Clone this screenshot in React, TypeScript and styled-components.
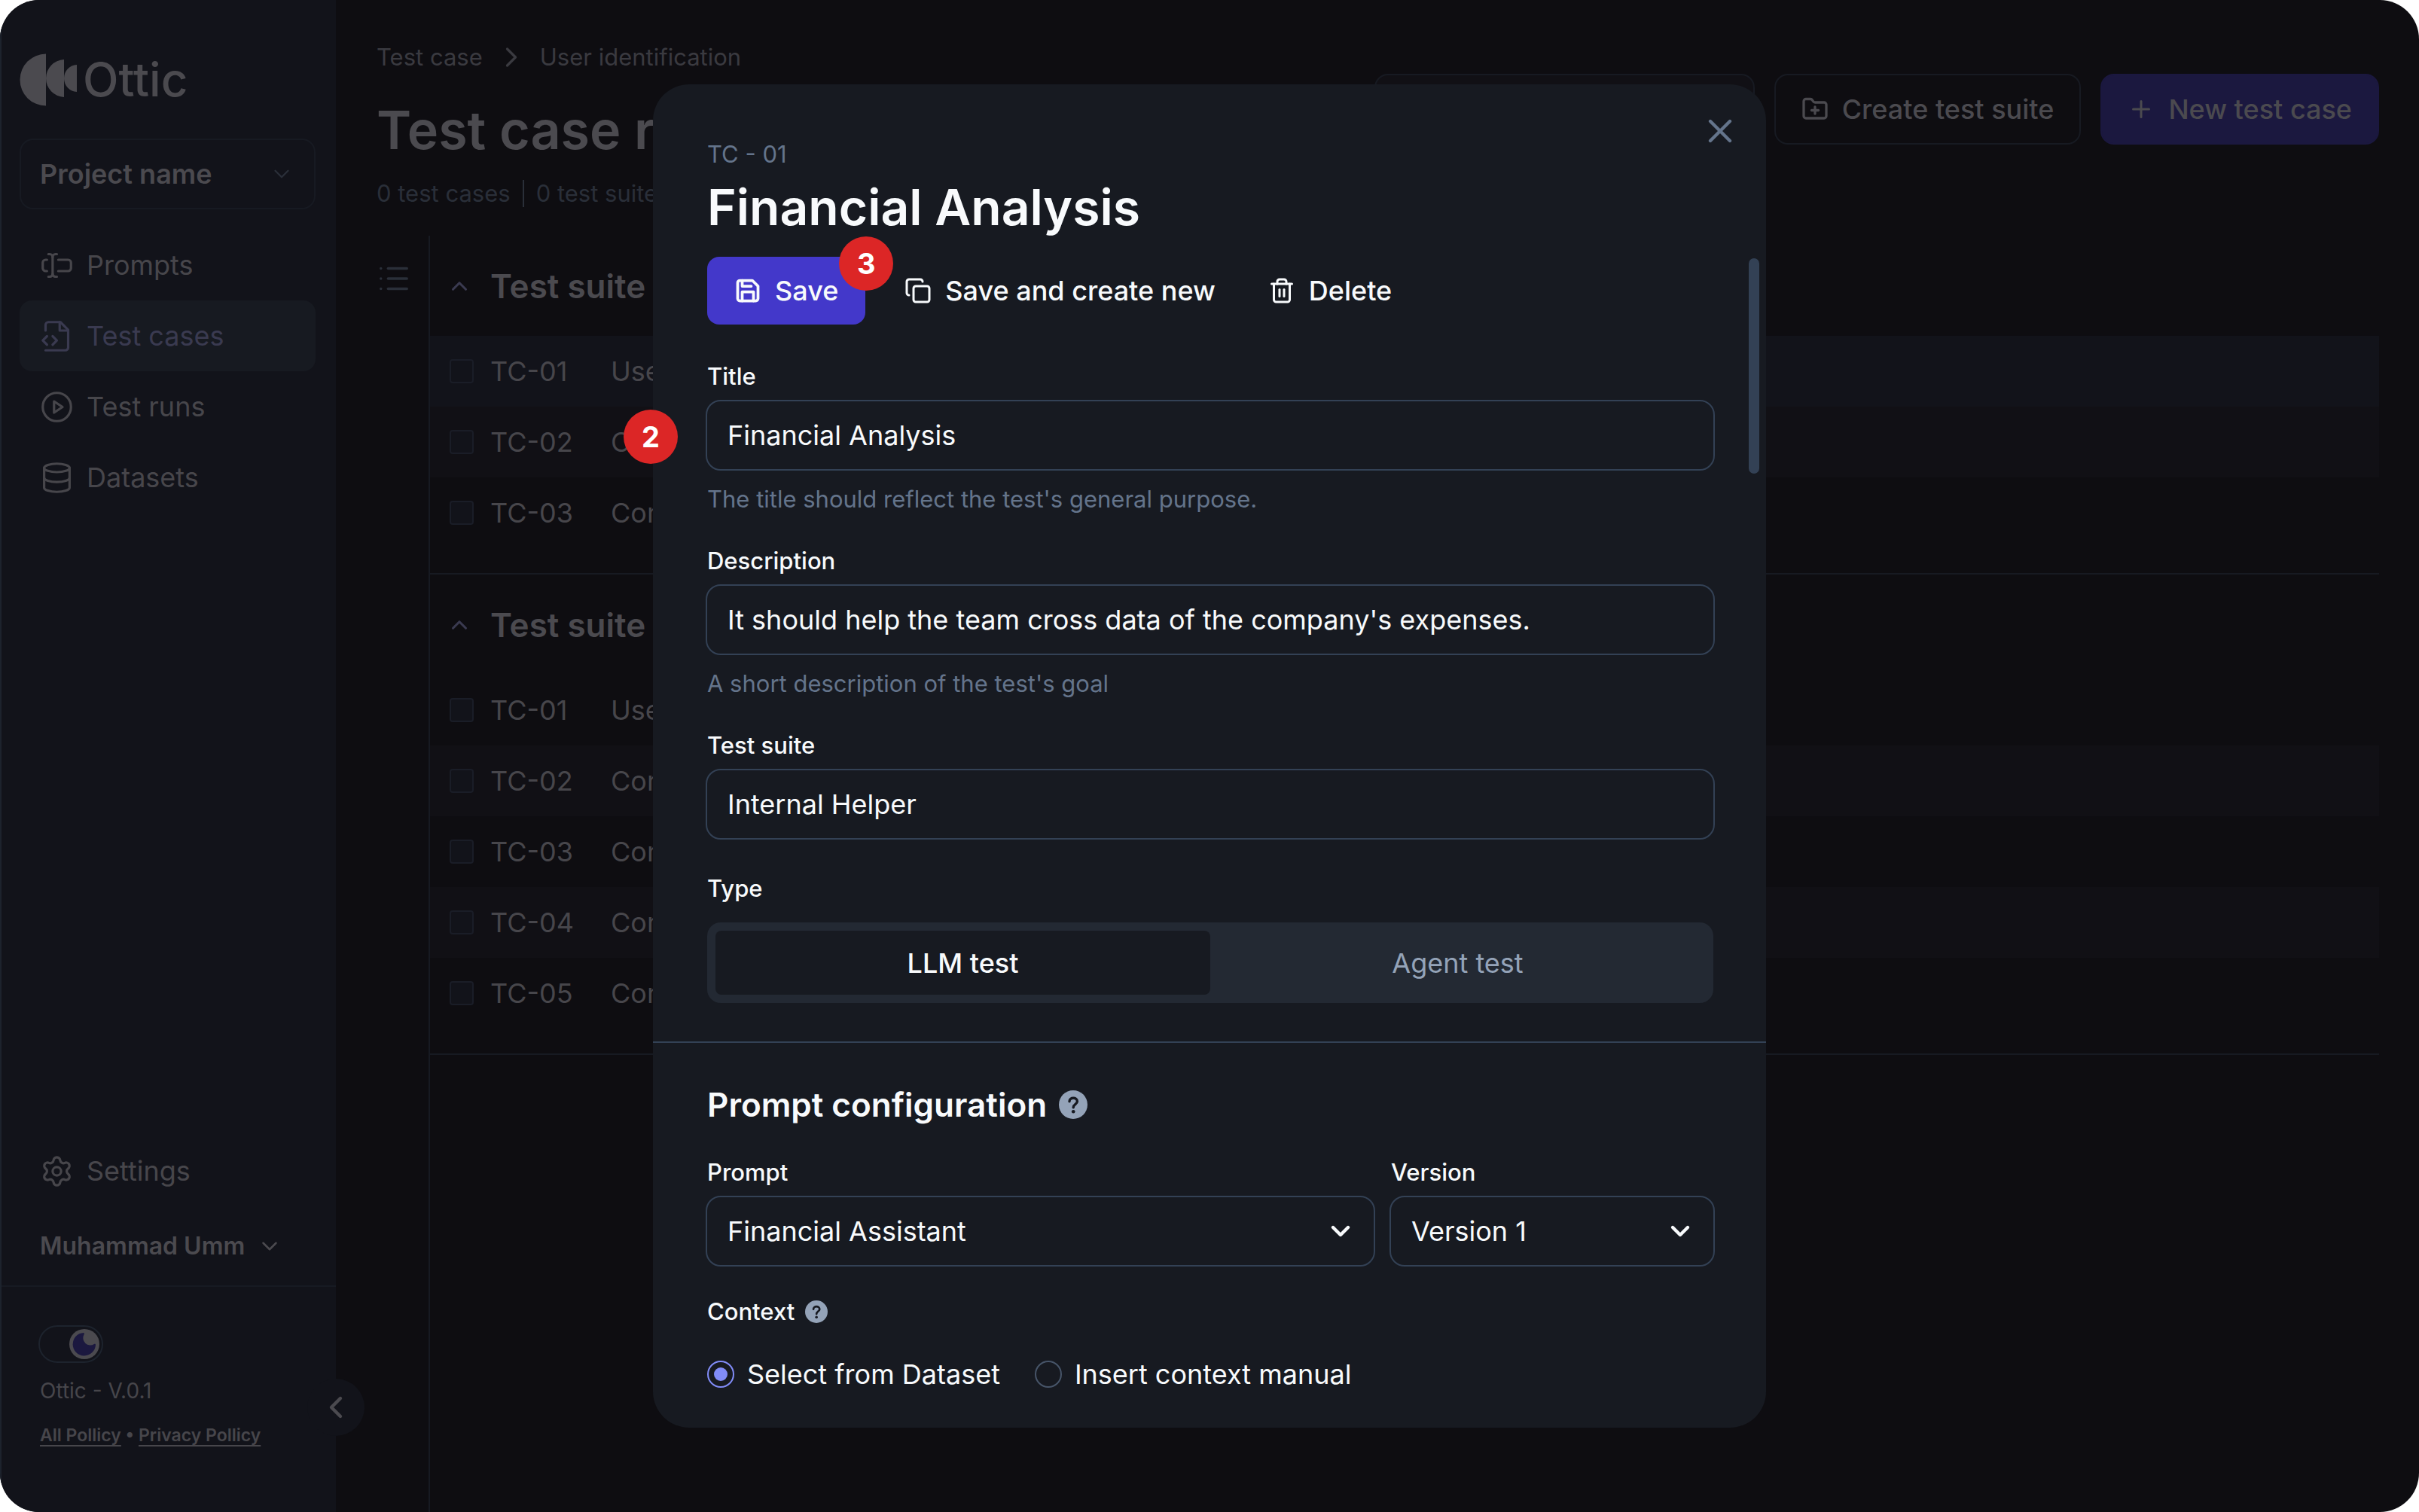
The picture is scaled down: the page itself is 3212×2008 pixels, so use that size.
import React, { useState } from "react";
import styled, { createGlobalStyle, css } from "styled-components";
import {
  ChevronDown,
  ChevronLeft,
  ChevronRight,
  ChevronUp,
  Copy,
  Database,
  FolderPlus,
  List,
  Plus,
  Settings,
  TextCursorInput,
  Trash2,
  X,
} from "lucide-react";

const color = {
  page: "#0e0d11",
  sidebar: "#12131a",
  sidebarEdge: "#1d232d",
  line: "#171a22",
  active: "#171a21",
  stripe: "#111015",
  dimText: "#47464b",
  dimStrong: "#4b4a4f",
  dimIndigo: "#3a3a50",
  dimSlate: "#2a2f39",
  dimAccent: "#1b183f",
  panel: "#171a21",
  border: "#334155",
  slate: "#64748b",
  slateLight: "#94a3b8",
  segment: "#232933",
  text: "#f8fafc",
  accent: "#4338ca",
  radio: "#818cf8",
  badge: "#dc2626",
};

const GlobalStyle = createGlobalStyle`
  *, *::before, *::after { box-sizing: border-box; }
  body { margin: 0; background: #fff; font-family: Inter, "Liberation Sans", sans-serif; }
  button, input, select { font: inherit; color: inherit; margin: 0; }
  button { cursor: pointer; }
  h1, h2, h3, p, ul { margin: 0; padding: 0; }
  svg { display: block; flex: none; }
`;

const Shell = styled.div`
  position: relative;
  display: flex;
  min-height: 100vh;
  border-radius: 52px;
  overflow: hidden;
  background: ${color.page};
  color: ${color.dimText};
`;

const Sidebar = styled.aside`
  position: relative;
  flex: none;
  display: flex;
  flex-direction: column;
  width: 446px;
  background: ${color.sidebar};
  border-left: 2px solid ${color.sidebarEdge};
`;

const SidebarTop = styled.div`
  flex: 1;
  display: flex;
  flex-direction: column;
  padding: 71px 27px 0 24px;
`;

const Brand = styled.div`
  display: flex;
  align-items: center;
  gap: 7px;
  height: 70px;
  margin-bottom: 43px;
  color: ${color.dimStrong};
  font-size: 62px;
  font-weight: 500;
  line-height: 70px;
`;

const ProjectButton = styled.button`
  display: flex;
  align-items: center;
  justify-content: space-between;
  height: 94px;
  padding: 0 26px 0 25px;
  margin-bottom: 27px;
  background: none;
  border: 2px solid ${color.line};
  border-radius: 18px;
  color: ${color.dimStrong};
  font-size: 36px;
  font-weight: 600;
`;

const NavItem = styled.a<{ $active?: boolean }>`
  display: flex;
  align-items: center;
  gap: 17px;
  height: 94px;
  padding: 0 27px;
  border-radius: 16px;
  font-size: 36px;
  text-decoration: none;
  color: ${(p) => (p.$active ? color.dimIndigo : color.dimText)};
  background: ${(p) => (p.$active ? color.active : "none")};
`;

const Spacer = styled.div`
  flex: 1;
`;

const UserButton = styled.button`
  display: flex;
  align-items: center;
  gap: 16px;
  height: 105px;
  padding: 0 27px;
  background: none;
  border: 0;
  color: ${color.dimStrong};
  font-size: 32px;
  font-weight: 600;
`;

const SidebarFooter = styled.footer`
  display: flex;
  flex-direction: column;
  align-items: flex-start;
  height: 301px;
  padding: 51px 49px 0;
  border-top: 2px solid ${color.line};
`;

const ThemeSwitch = styled.button`
  display: flex;
  justify-content: flex-end;
  align-items: center;
  width: 86px;
  height: 50px;
  padding: 3px;
  background: none;
  border: 2px solid ${color.sidebarEdge};
  border-radius: 25px;
`;

const VersionText = styled.p`
  margin-top: 19px;
  padding-left: 2px;
  font-size: 28px;
  line-height: 36px;
`;

const Policies = styled.p`
  margin-top: 25px;
  padding-left: 2px;
  font-size: 23px;
  font-weight: 600;
  line-height: 32px;
  white-space: nowrap;

  a {
    color: inherit;
    text-underline-offset: 5px;
    text-decoration-thickness: 2px;
  }
`;

const CollapseButton = styled.button`
  position: absolute;
  right: -38px;
  bottom: 101px;
  display: grid;
  place-items: center;
  width: 76px;
  height: 76px;
  padding: 0;
  border: 0;
  border-radius: 50%;
  background: ${color.sidebar};
  color: ${color.dimStrong};
`;

const Main = styled.main`
  flex: 1;
  min-width: 0;
  display: flex;
  flex-direction: column;
  padding: 56px 53px 0 54px;
`;

const Header = styled.header`
  display: flex;
  justify-content: space-between;
  align-items: flex-start;
  height: 257px;
`;

const Crumbs = styled.nav`
  display: flex;
  align-items: center;
  gap: 16px;
  height: 40px;
  font-size: 31px;
  line-height: 40px;
  color: #3a3a40;

  a {
    color: inherit;
    text-decoration: none;
  }
`;

const PageTitle = styled.h1`
  margin-top: 33px;
  color: ${color.dimStrong};
  font-size: 70px;
  font-weight: 600;
  line-height: 88px;
`;

const Counts = styled.p`
  display: flex;
  align-items: center;
  gap: 16px;
  margin-top: 20px;
  color: ${color.dimSlate};
  font-size: 31px;
  line-height: 40px;
`;

const CountDivider = styled.span`
  width: 2px;
  height: 36px;
  background: ${color.dimSlate};
`;

const Actions = styled.div`
  display: flex;
  gap: 26px;
  padding-top: 42px;
`;

const SearchInput = styled.input`
  width: 505px;
  height: 94px;
  padding: 0 28px;
  background: ${color.stripe};
  border: 2px solid ${color.line};
  border-radius: 18px;
`;

const HeaderButton = styled.button<{ $primary?: boolean }>`
  display: flex;
  align-items: center;
  gap: 18px;
  height: 94px;
  padding: 0 34px;
  background: ${(p) => (p.$primary ? color.dimAccent : "none")};
  border: 2px solid ${(p) => (p.$primary ? color.dimAccent : color.line)};
  border-radius: 18px;
  color: ${color.dimStrong};
  font-size: 36px;
  font-weight: 500;
  white-space: nowrap;
`;

const Workspace = styled.div`
  flex: 1;
  display: flex;
`;

const ListToggle = styled.button`
  display: flex;
  align-items: flex-start;
  width: 69px;
  padding: 34px 0 0;
  background: none;
  border: 0;
  color: ${color.dimSlate};
`;

const Suites = styled.div`
  flex: 1;
  border-left: 2px solid ${color.line};
`;

const Suite = styled.section`
  padding-bottom: 33px;
  border-bottom: 2px solid ${color.line};
`;

const SuiteHeader = styled.h2`
  display: flex;
  align-items: center;
  gap: 24px;
  height: 133px;
  padding-left: 22px;
  color: ${color.dimStrong};
  font-size: 44px;
  font-weight: 600;

  svg {
    color: ${color.dimIndigo};
  }
`;

const CaseTable = styled.table`
  width: 100%;
  border-collapse: collapse;
  table-layout: fixed;
`;

const CaseRow = styled.tr<{ $tone: "plain" | "stripe" | "selected" }>`
  height: 94px;
  font-size: 36px;
  background: ${(p) =>
    p.$tone === "selected" ? color.sidebar : p.$tone === "stripe" ? color.stripe : "none"};
`;

const Cell = styled.td<{ $width?: number }>`
  ${(p) => p.$width && css`width: ${p.$width}px;`}
  padding: 0;
`;

const CheckCell = styled(Cell)`
  padding-left: 26px;
`;

const Checkbox = styled.input`
  display: block;
  appearance: none;
  width: 32px;
  height: 32px;
  background: ${color.sidebar};
  border: 2px solid #1a1d27;
  border-radius: 4px;
`;

const Overlay = styled.div`
  position: absolute;
  inset: 0;
  display: grid;
  place-items: center;
`;

const Modal = styled.section`
  position: relative;
  width: 1478px;
  border-radius: 48px;
  background: ${color.panel};
  color: ${color.text};
`;

const ModalSection = styled.div`
  display: flex;
  flex-direction: column;
  padding: 0 68px 0 70px;
`;

const CloseButton = styled.button`
  position: absolute;
  top: 36px;
  right: 35px;
  display: grid;
  place-items: center;
  width: 52px;
  height: 52px;
  padding: 0;
  background: none;
  border: 0;
  color: ${color.slate};
`;

const ScrollThumb = styled.div`
  position: absolute;
  top: 231px;
  right: 9px;
  width: 14px;
  height: 286px;
  border-radius: 7px;
  background: ${color.border};
`;

const CaseId = styled.p`
  padding: 73px 2px 0;
  color: ${color.slate};
  font-size: 31px;
  line-height: 40px;
`;

const ModalTitle = styled.h2`
  padding: 8px 2px 0;
  font-size: 66px;
  font-weight: 600;
  line-height: 84px;
`;

const Toolbar = styled.div`
  display: flex;
  align-items: center;
  gap: 34px;
  margin: 24px 2px 0;
`;

const ToolButton = styled.button<{ $primary?: boolean }>`
  position: relative;
  display: flex;
  align-items: center;
  gap: 18px;
  height: 90px;
  padding: 0 ${(p) => (p.$primary ? 36 : 18)}px;
  background: ${(p) => (p.$primary ? color.accent : "none")};
  border: 0;
  border-radius: 16px;
  font-size: 36px;
  font-weight: 500;
`;

const StepBadge = styled.span`
  position: absolute;
  display: grid;
  place-items: center;
  width: 72px;
  height: 72px;
  border-radius: 50%;
  background: ${color.badge};
  color: #fff;
  font-size: 38px;
  font-weight: 700;
`;

const SaveBadge = styled(StepBadge)`
  top: -27px;
  right: -37px;
`;

const FieldBadge = styled(StepBadge)`
  left: -109px;
  bottom: 9px;
`;

const Field = styled.div<{ $gap?: number }>`
  display: flex;
  flex-direction: column;
  flex: 1;
  margin-top: ${(p) => p.$gap ?? 42}px;
`;

const Label = styled.label`
  display: flex;
  align-items: center;
  gap: 14px;
  padding: 0 2px;
  font-size: 31px;
  font-weight: 500;
  line-height: 40px;
`;

const Control = styled.div`
  position: relative;
  display: flex;
  align-items: center;
  margin-top: 11px;
`;

const boxed = css`
  width: 100%;
  height: 94px;
  padding: 0 27px;
  background: ${color.panel};
  border: 2px solid ${color.border};
  border-radius: 20px;
  font-size: 36px;
`;

const TextInput = styled.input`
  ${boxed}
`;

const Select = styled.select`
  ${boxed}
  appearance: none;
`;

const SelectArrow = styled.span`
  position: absolute;
  right: 26px;
  pointer-events: none;
`;

const Hint = styled.p`
  margin-top: 18px;
  padding: 0 2px;
  color: ${color.slate};
  font-size: 31px;
  line-height: 40px;
`;

const Segmented = styled.div`
  display: grid;
  grid-template-columns: 1fr 1fr;
  margin: 25px 2px 0;
  padding: 11px;
  border-radius: 18px;
  background: ${color.segment};
`;

const Segment = styled.button<{ $on: boolean }>`
  height: 85px;
  border: 0;
  border-radius: 8px;
  background: ${(p) => (p.$on ? color.panel : "none")};
  color: ${(p) => (p.$on ? color.text : color.slateLight)};
  font-size: 36px;
  font-weight: ${(p) => (p.$on ? 500 : 400)};
`;

const Rule = styled.hr`
  height: 2px;
  margin: 51px 0 0;
  border: 0;
  background: ${color.border};
`;

const SectionTitle = styled.h3`
  display: flex;
  align-items: center;
  gap: 16px;
  padding: 54px 2px 0;
  font-size: 44px;
  font-weight: 600;
  line-height: 56px;
`;

const FieldRow = styled.div`
  display: grid;
  grid-template-columns: 889px 1fr;
  gap: 19px;
`;

const RadioRow = styled.div`
  display: flex;
  gap: 46px;
  padding: 40px 2px 48px;
`;

const RadioLabel = styled.label`
  display: flex;
  align-items: center;
  gap: 17px;
  font-size: 36px;
  line-height: 46px;
`;

const Radio = styled.input`
  display: grid;
  place-items: center;
  appearance: none;
  width: 36px;
  height: 36px;
  border: 2px solid #475569;
  border-radius: 50%;

  &:checked {
    border-color: ${color.radio};
  }

  &:checked::after {
    content: "";
    width: 18px;
    height: 18px;
    border-radius: 50%;
    background: ${color.radio};
  }
`;

function BrandMark() {
  return (
    <svg width="77" height="70" viewBox="0 0 77 70" fill={color.dimStrong} aria-hidden="true">
      <path d="M35 0.500V69.500A34.500 34.500 0 0 1 35 0.500Z" />
      <path d="M59 8V58A25 25 0 0 1 35 33A25 25 0 0 1 59 8Z" />
      <path d="M76 15V51A18 18 0 0 1 59 33A18 18 0 0 1 76 15Z" />
    </svg>
  );
}

type LineIconProps = { size: number; strokeWidth: number };

function LineIcon({ size, strokeWidth, children }: LineIconProps & { children: React.ReactNode }) {
  return (
    <svg
      width={size}
      height={size}
      viewBox="0 0 24 24"
      fill="none"
      stroke="currentColor"
      strokeWidth={strokeWidth}
      strokeLinecap="round"
      strokeLinejoin="round"
      aria-hidden="true"
    >
      {children}
    </svg>
  );
}

function FileCode(props: LineIconProps) {
  return (
    <LineIcon {...props}>
      <path d="M4 22h14a2 2 0 0 0 2-2V7.500L14.500 2H6a2 2 0 0 0-2 2v4" />
      <path d="M14 2v6h6" />
      <path d="m5 12-3 3 3 3" />
      <path d="m9 18 3-3-3-3" />
    </LineIcon>
  );
}

function PlayCircle(props: LineIconProps) {
  return (
    <LineIcon {...props}>
      <circle cx="12" cy="12" r="10" />
      <path d="m10 8 6 4-6 4z" />
    </LineIcon>
  );
}

function Floppy(props: LineIconProps) {
  return (
    <LineIcon {...props}>
      <path d="M19 21H5a2 2 0 0 1-2-2V5a2 2 0 0 1 2-2h11l5 5v11a2 2 0 0 1-2 2z" />
      <path d="M17 21v-8H7v8" />
      <path d="M7 3v5h8" />
    </LineIcon>
  );
}

function Moon() {
  return (
    <svg width="40" height="40" viewBox="0 0 40 40" aria-hidden="true">
      <circle cx="20" cy="20" r="20" fill={color.dimStrong} />
      <path
        d="M19 5A15.200 15.200 0 1 0 35 21C35 19.500 34 19.400 33 20A9.500 9.500 0 0 1 19.500 7.500C20 6 20 5 19 5Z"
        fill={color.dimAccent}
      />
    </svg>
  );
}

function Help({ size }: { size: number }) {
  return (
    <svg width={size} height={size} viewBox="0 0 38 38" role="img" aria-label="Help">
      <circle cx="19" cy="19" r="19" fill={color.slateLight} />
      <path
        d="M14 14.800C14 8.800 24.400 8.800 24.400 14.800C24.400 18.400 19.200 18.400 19.200 22.800"
        fill="none"
        stroke={color.panel}
        strokeWidth="3.400"
        strokeLinecap="round"
      />
      <circle cx="19.200" cy="28.200" r="2.300" fill={color.panel} />
    </svg>
  );
}

const navigation = [
  { name: "Prompts", Icon: TextCursorInput },
  { name: "Test cases", Icon: FileCode },
  { name: "Test runs", Icon: PlayCircle },
  { name: "Datasets", Icon: Database },
];

const suites = [
  {
    name: "Test suite 1",
    selected: "TC-01",
    cases: [
      ["TC-01", "User identification"],
      ["TC-02", "Confirm order"],
      ["TC-03", "Confirm address"],
    ],
  },
  {
    name: "Test suite 2",
    selected: "",
    cases: [
      ["TC-01", "User identification"],
      ["TC-02", "Confirm order"],
      ["TC-03", "Confirm address"],
      ["TC-04", "Confirm payment"],
      ["TC-05", "Confirm delivery"],
    ],
  },
];

function SidebarPanel() {
  return (
    <Sidebar>
      <SidebarTop>
        <Brand>
          <BrandMark />
          Ottic
        </Brand>
        <ProjectButton type="button">
          Project name
          <ChevronDown size={34} strokeWidth={1.6} color={color.dimSlate} />
        </ProjectButton>
        {navigation.map(({ name, Icon }) => (
          <NavItem key={name} href="#" $active={name === "Test cases"}>
            <Icon size={45} strokeWidth={1.7} />
            {name}
          </NavItem>
        ))}
        <Spacer />
        <NavItem href="#">
          <Settings size={45} strokeWidth={1.7} />
          Settings
        </NavItem>
        <UserButton type="button">
          Muhammad Umm
          <ChevronDown size={34} strokeWidth={1.8} />
        </UserButton>
      </SidebarTop>
      <SidebarFooter>
        <ThemeSwitch type="button" role="switch" aria-checked="true" aria-label="Dark theme">
          <Moon />
        </ThemeSwitch>
        <VersionText>Ottic - V.0.1</VersionText>
        <Policies>
          <a href="#">All Pollicy</a> • <a href="#">Privacy Pollicy</a>
        </Policies>
      </SidebarFooter>
      <CollapseButton type="button" aria-label="Collapse sidebar">
        <ChevronLeft size={48} strokeWidth={2.2} />
      </CollapseButton>
    </Sidebar>
  );
}

function CaseList() {
  return (
    <Main>
      <Header>
        <div>
          <Crumbs aria-label="Breadcrumb">
            <a href="#">Test case</a>
            <ChevronRight size={44} strokeWidth={1.8} />
            <span>User identification</span>
          </Crumbs>
          <PageTitle>Test case repository</PageTitle>
          <Counts>
            0 test cases
            <CountDivider />0 test suites
          </Counts>
        </div>
        <Actions>
          <SearchInput type="search" aria-label="Search test cases" />
          <HeaderButton type="button">
            <FolderPlus size={36} strokeWidth={2.2} />
            Create test suite
          </HeaderButton>
          <HeaderButton type="button" $primary>
            <Plus size={36} strokeWidth={2} />
            New test case
          </HeaderButton>
        </Actions>
      </Header>
      <Workspace>
        <ListToggle type="button" aria-label="Show outline">
          <List size={46} strokeWidth={1.8} />
        </ListToggle>
        <Suites>
          {suites.map((suite) => (
            <Suite key={suite.name}>
              <SuiteHeader>
                <ChevronUp size={34} strokeWidth={2.2} />
                {suite.name}
              </SuiteHeader>
              <CaseTable>
                <tbody>
                  {suite.cases.map(([id, name], i) => (
                    <CaseRow
                      key={id}
                      $tone={id === suite.selected ? "selected" : i % 2 ? "stripe" : "plain"}
                    >
                      <CheckCell $width={80}>
                        <Checkbox type="checkbox" aria-label={`Select ${id}`} />
                      </CheckCell>
                      <Cell $width={160}>{id}</Cell>
                      <Cell>{name}</Cell>
                    </CaseRow>
                  ))}
                </tbody>
              </CaseTable>
            </Suite>
          ))}
        </Suites>
      </Workspace>
    </Main>
  );
}

function CaseModal() {
  const [kind, setKind] = useState("LLM test");
  return (
    <Modal role="dialog" aria-label="Financial Analysis">
      <CloseButton type="button" aria-label="Close">
        <X size={52} strokeWidth={2} />
      </CloseButton>
      <ScrollThumb />
      <ModalSection>
        <CaseId>TC - 01</CaseId>
        <ModalTitle>Financial Analysis</ModalTitle>
        <Toolbar>
          <ToolButton type="button" $primary>
            <Floppy size={36} strokeWidth={2.5} />
            Save
            <SaveBadge>3</SaveBadge>
          </ToolButton>
          <ToolButton type="button">
            <Copy size={36} strokeWidth={2} />
            Save and create new
          </ToolButton>
          <ToolButton type="button">
            <Trash2 size={36} strokeWidth={2} />
            Delete
          </ToolButton>
        </Toolbar>
        <Field $gap={49}>
          <Label htmlFor="title">Title</Label>
          <Control>
            <FieldBadge>2</FieldBadge>
            <TextInput id="title" defaultValue="Financial Analysis" />
          </Control>
          <Hint>The title should reflect the test's general purpose.</Hint>
        </Field>
        <Field>
          <Label htmlFor="description">Description</Label>
          <Control>
            <TextInput
              id="description"
              defaultValue="It should help the team cross data of the company's expenses."
            />
          </Control>
          <Hint>A short description of the test's goal</Hint>
        </Field>
        <Field>
          <Label htmlFor="suite">Test suite</Label>
          <Control>
            <TextInput id="suite" defaultValue="Internal Helper" />
          </Control>
        </Field>
        <Field $gap={45}>
          <Label as="span" id="kind">
            Type
          </Label>
          <Segmented role="group" aria-labelledby="kind">
            {["LLM test", "Agent test"].map((name) => (
              <Segment
                key={name}
                type="button"
                $on={kind === name}
                aria-pressed={kind === name}
                onClick={() => setKind(name)}
              >
                {name}
              </Segment>
            ))}
          </Segmented>
        </Field>
      </ModalSection>
      <Rule />
      <ModalSection>
        <SectionTitle>
          Prompt configuration
          <Help size={38} />
        </SectionTitle>
        <FieldRow>
          <Field>
            <Label htmlFor="prompt">Prompt</Label>
            <Control>
              <Select id="prompt">
                <option>Financial Assistant</option>
              </Select>
              <SelectArrow>
                <ChevronDown size={40} strokeWidth={2.6} />
              </SelectArrow>
            </Control>
          </Field>
          <Field>
            <Label htmlFor="version">Version</Label>
            <Control>
              <Select id="version">
                <option>Version 1</option>
              </Select>
              <SelectArrow>
                <ChevronDown size={40} strokeWidth={2.6} />
              </SelectArrow>
            </Control>
          </Field>
        </FieldRow>
        <Field $gap={40}>
          <Label as="span" id="context">
            Context
            <Help size={30} />
          </Label>
          <RadioRow role="radiogroup" aria-labelledby="context">
            <RadioLabel>
              <Radio type="radio" name="context" defaultChecked />
              Select from Dataset
            </RadioLabel>
            <RadioLabel>
              <Radio type="radio" name="context" />
              Insert context manual
            </RadioLabel>
          </RadioRow>
        </Field>
      </ModalSection>
    </Modal>
  );
}

export default function App() {
  return (
    <>
      <GlobalStyle />
      <Shell>
        <SidebarPanel />
        <CaseList />
        <Overlay>
          <CaseModal />
        </Overlay>
      </Shell>
    </>
  );
}
